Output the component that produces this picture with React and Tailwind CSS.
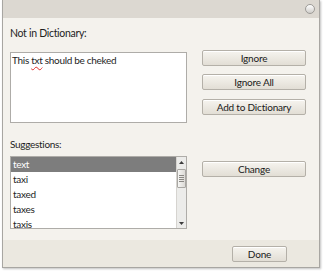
import React from "react";

const font = { fontFamily: 'Lato, "Noto Sans", sans-serif' };

function Btn({ children, className = "" }) {
  return (
    <div
      className={
        "flex h-[16px] w-[104px] items-center justify-center rounded-[2px] border border-[#b4b0a8] bg-gradient-to-b from-[#f6f4ef] to-[#e2ded5] text-[10px] tracking-[-0.2px] leading-none text-[#1a1a1a] shadow-[inset_0_1px_0_#ffffff] " +
        className
      }
    >
      {children}
    </div>
  );
}

export default function App() {
  const items = ["text", "taxi", "taxed", "taxes", "taxis"];
  return (
    <div className="h-[274px] w-[326px] bg-white tracking-[-0.3px]" style={font}>
      <div className="ml-[2px] flex h-[268px] w-[318px] flex-col border-x border-b border-[#a8a6a2] shadow-[1px_1px_2px_rgba(0,0,0,0.25)]">
        <div className="flex h-[18px] items-center justify-end bg-[#dcd8d1] pr-[4px]">
          <div className="h-[10px] w-[10px] rounded-full border border-[#9d9b97] bg-gradient-to-b from-white to-[#cfcdc9]" />
        </div>
        <div className="flex flex-1 bg-[#f4f2ed] pl-[7px] pr-[13px]">
          <div className="flex w-[177px] flex-col">
            <div className="mt-[8px] h-[15px] text-[10.5px] leading-[15px] text-[#1e1e1e]">Not in Dictionary:</div>
            <div className="mt-[11px] h-[71px] border border-[#aeaca8] bg-white px-[1px] text-[10px] leading-[14px] text-[#1e1e1e]">
              This{" "}
              <span className="underline decoration-[#e0302c] decoration-wavy decoration-1 underline-offset-2">txt</span>{" "}
              should be cheked
            </div>
            <div className="mt-[14px] h-[15px] text-[10px] leading-[15px] text-[#1e1e1e]">Suggestions:</div>
            <div className="mt-[4px] flex h-[73px] border border-[#aeaca8] bg-white">
              <div className="flex flex-1 flex-col overflow-hidden">
                {items.map((t, i) => (
                  <div
                    key={t}
                    className={
                      "h-[15px] shrink-0 px-[2px] text-[10px] leading-[15px] " +
                      (i === 0 ? "bg-[#7d7d7d] text-white" : "text-[#1e1e1e]")
                    }
                  >
                    {t}
                  </div>
                ))}
              </div>
              <div className="flex w-[10px] flex-col items-center border-l border-[#d6d4d0] bg-[#ececea]">
                <div className="flex h-[10px] items-center justify-center">
                  <svg width="5" height="3" viewBox="0 0 5 3">
                    <path d="M0 3 L2.5 0 L5 3 Z" fill="#3c3c3c" />
                  </svg>
                </div>
                <div className="mt-[2px] flex h-[19px] w-[9px] flex-col items-center justify-center gap-[1px] rounded-[1px] border border-[#a9a7a3] bg-gradient-to-r from-[#f6f6f4] to-[#dcdad6]">
                  <div className="h-px w-[5px] bg-[#8a8884]" />
                  <div className="h-px w-[5px] bg-[#8a8884]" />
                  <div className="h-px w-[5px] bg-[#8a8884]" />
                  <div className="h-px w-[5px] bg-[#8a8884]" />
                </div>
                <div className="flex-1" />
                <div className="flex h-[10px] items-center justify-center">
                  <svg width="5" height="3" viewBox="0 0 5 3">
                    <path d="M0 0 L2.5 3 L5 0 Z" fill="#3c3c3c" />
                  </svg>
                </div>
              </div>
            </div>
          </div>
          <div className="ml-[15px] flex flex-col">
            <Btn className="mt-[32px]">Ignore</Btn>
            <Btn className="mt-[8px]">Ignore All</Btn>
            <Btn className="mt-[9px]">Add to Dictionary</Btn>
            <Btn className="mt-[46px]">Change</Btn>
          </div>
        </div>
        <div className="flex h-[27px] items-center justify-end bg-[#ebe8e0] pr-[32px]">
          <div className="flex h-[16px] w-[55px] items-center justify-center rounded-[2px] border border-[#b4b0a8] bg-gradient-to-b from-[#f6f4ef] to-[#e2ded5] text-[10px] tracking-[-0.2px] leading-none text-[#1a1a1a] shadow-[inset_0_1px_0_#ffffff]">
            Done
          </div>
        </div>
      </div>
    </div>
  );
}
